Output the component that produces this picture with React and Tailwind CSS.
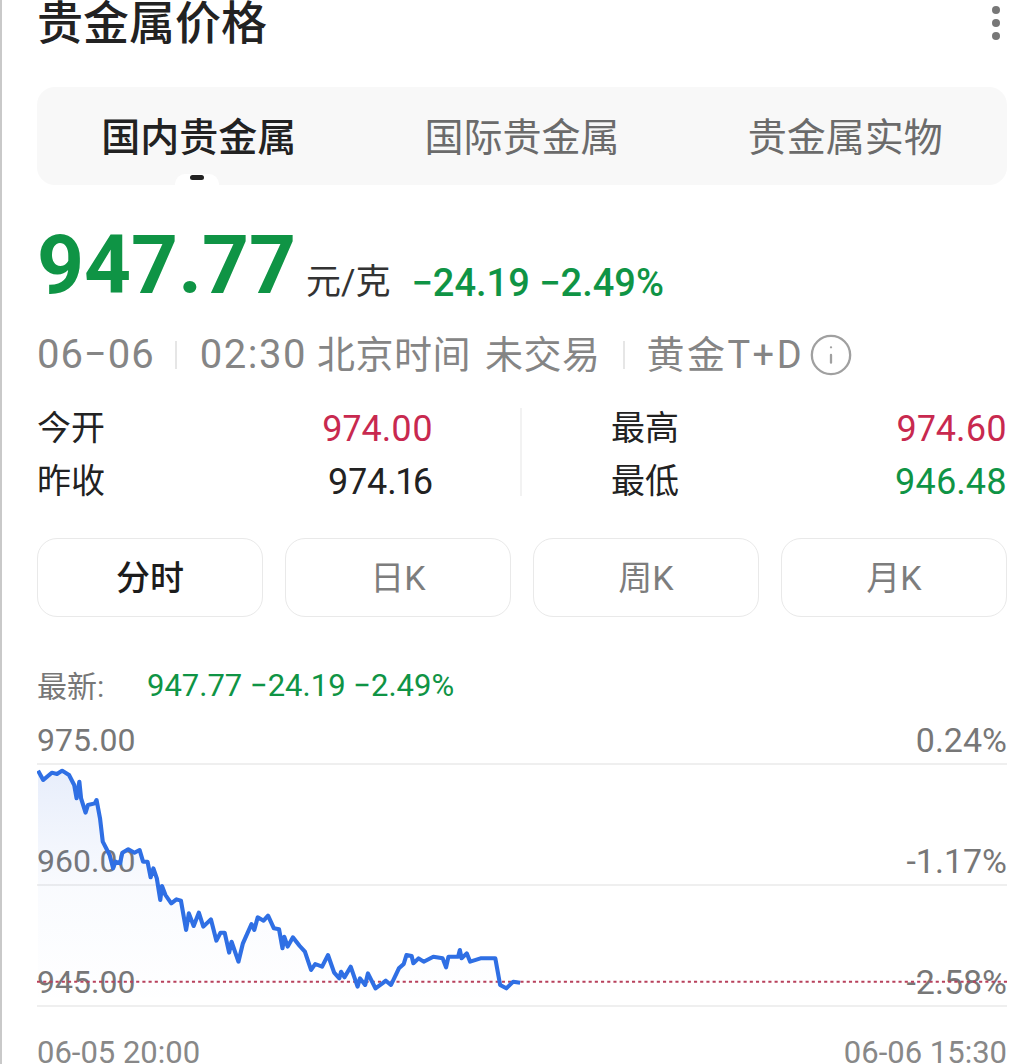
import { Info } from 'lucide-react';

const font = { fontFamily: 'Roboto, "Noto Sans CJK SC", sans-serif' };

// line traced from the reference crop, x at 2.904x and y at 3x
const line =
  '110,92 125,120 150,98 165,102 180,92 200,105 215,135 222,175 230,125 235,175 248,218 255,195 275,190 280,180 290,235 298,305 318,345 328,385 335,365 348,370 355,338 372,328 390,338 405,330 415,365 428,365 437,412 445,385 455,415 465,480 470,438 480,465 497,490 512,478 525,482 540,570 548,520 562,558 577,518 590,560 612,538 628,602 640,578 652,578 665,638 672,605 692,665 705,610 730,552 738,570 748,532 765,542 778,527 795,565 810,568 820,625 825,590 835,620 850,592 870,618 885,635 903,690 915,672 935,680 952,645 970,698 985,715 990,695 1000,712 1018,680 1038,740 1045,715 1060,735 1068,700 1090,745 1110,730 1120,722 1135,735 1158,685 1172,672 1180,645 1195,648 1200,670 1215,655 1230,665 1258,650 1285,655 1295,682 1302,650 1330,650 1335,630 1340,655 1355,640 1365,665 1395,655 1438,655 1452,735 1470,745 1490,725 1510,728';

const fillLine = `110,798 ${line} 1510,798`;

function Stat({ label, value, color }) {
  return (
    <div className="flex justify-between items-center h-[53px]">
      <span className="text-[34px] text-[#222]">{label}</span>
      <span className={`text-[36px] proportional-nums ${color}`}>{value}</span>
    </div>
  );
}

function RangeButton({ label, active }) {
  return (
    <div
      className={`flex-1 h-[79px] pt-[2px] flex items-center justify-center rounded-[20px] border border-[#e9e9e9] text-[34px] ${
        active ? 'font-medium text-[#1c1c1c]' : 'text-[#7d7d7d]'
      }`}
    >
      {label}
    </div>
  );
}

function AxisRow({ left, right, first }) {
  return (
    <div
      className={`flex justify-between items-end pb-[1px] border-b-2 border-[#efefef] text-[32px] leading-[44px] text-[#777] ${
        first ? 'h-[49px]' : 'h-[121px]'
      }`}
    >
      <span>{left}</span>
      <span className="text-[34px]">{right}</span>
    </div>
  );
}

export default function App() {
  return (
    <div style={font} className="w-[1012px] h-[1064px] overflow-hidden bg-white border-l-2 border-[#c9c9c9] pl-[35px] pr-[5px]">
      <div className="h-[46px] flex justify-between items-center">
        <h1 className="text-[46px] leading-[46px] font-medium text-[#222]">贵金属价格</h1>
        <div className="flex flex-col gap-[5px] pr-[7px]">
          <span className="w-[8px] h-[8px] rounded-full bg-[#777]" />
          <span className="w-[8px] h-[8px] rounded-full bg-[#777]" />
          <span className="w-[8px] h-[8px] rounded-full bg-[#777]" />
        </div>
      </div>

      <div className="relative mt-[41px] h-[98px] pt-[4px] rounded-[18px] bg-[#f8f8f8] grid grid-cols-3 items-center text-center text-[39px] text-[#6b6b6b]">
        <span className="font-medium text-[#222]">国内贵金属</span>
        <span>国际贵金属</span>
        <span>贵金属实物</span>
        <div className="absolute left-[138px] bottom-0 w-[44px] h-[11px] rounded-t-[10px] bg-white flex justify-center pt-[1px]">
          <span className="w-[14px] h-[5px] rounded-full bg-[#222]" />
        </div>
      </div>

      <div className="mt-[32px] h-[96px] flex items-end">
        <span className="text-[82px] leading-[96px] font-bold text-[#0f9445]">947.77</span>
        <span className="ml-[10px] mb-[8px] text-[35px] leading-[44px] text-[#333]">元/克</span>
        <span className="ml-[21px] mb-[8px] text-[38px] leading-[44px] font-medium text-[#0f9445]">−24.19 −2.49%</span>
      </div>

      <div className="mt-[12px] h-[60px] flex items-center text-[38px] text-[#858585]">
        <span className="text-[40px] tracking-[1px]">06−06</span>
        <span className="w-[2px] h-[28px] bg-[#e6e6e6] ml-[20px] mr-[23px]" />
        <span className="text-[40px] tracking-[1.5px] mr-[10px]">02:30</span>
        <span className="tracking-[0.5px] mr-[14px]">北京时间</span>
        <span className="tracking-[0.5px]">未交易</span>
        <span className="w-[2px] h-[28px] bg-[#e6e6e6] ml-[23px] mr-[21px]" />
        <span className="tracking-[2.5px]">黄金T+D</span>
        <Info size={46} strokeWidth={1.2} className="ml-[4px] text-[#a0a0a0]" />
      </div>

      <div className="mt-[17px] flex">
        <div className="w-[396px]">
          <Stat label="今开" value="974.00" color="text-[#c8294f]" />
          <Stat label="昨收" value="974.16" color="text-[#222]" />
        </div>
        <div className="w-[2px] ml-[87px] mr-[89px] mt-[6px] mb-[12px] bg-[#f2f2f2]" />
        <div className="flex-1">
          <Stat label="最高" value="974.60" color="text-[#c8294f]" />
          <Stat label="最低" value="946.48" color="text-[#0f9445]" />
        </div>
      </div>

      <div className="mt-[30px] flex gap-[22px]">
        <RangeButton label="分时" active />
        <RangeButton label="日K" />
        <RangeButton label="周K" />
        <RangeButton label="月K" />
      </div>

      <div className="mt-[46px] h-[46px] flex items-center text-[30px]">
        <span className="w-[110px] text-[#777]">最新:</span>
        <span className="text-[31px] text-[#0f9445]">947.77 −24.19 −2.49%</span>
      </div>

      <div className="relative mt-[7px]">
        <AxisRow left="975.00" right="0.24%" first />
        <AxisRow left="960.00" right="-1.17%" />
        <AxisRow left="945.00" right="-2.58%" />
        <svg
          className="absolute left-0 top-[48px] w-[970px] h-[242px]"
          viewBox="107 72 2817 726"
          preserveAspectRatio="none"
        >
          <defs>
            <linearGradient id="area" x1="0" y1="0" x2="0" y2="1">
              <stop offset="0" stopColor="#3b6fe0" stopOpacity="0.12" />
              <stop offset="0.5" stopColor="#3b6fe0" stopOpacity="0.03" />
              <stop offset="1" stopColor="#3b6fe0" stopOpacity="0" />
            </linearGradient>
          </defs>
          <polygon points={fillLine} fill="url(#area)" />
          <line x1="107" y1="725" x2="2924" y2="725" stroke="#b8415c" strokeWidth="6" strokeDasharray="9 9" />
          <polyline points={line} fill="none" stroke="#2f6fe4" strokeWidth="12" strokeLinejoin="round" />
        </svg>
      </div>

      <div className="mt-[34px] flex justify-between text-[31px] leading-[24px] text-[#888]">
        <span>06-05 20:00</span>
        <span>06-06 15:30</span>
      </div>
    </div>
  );
}
